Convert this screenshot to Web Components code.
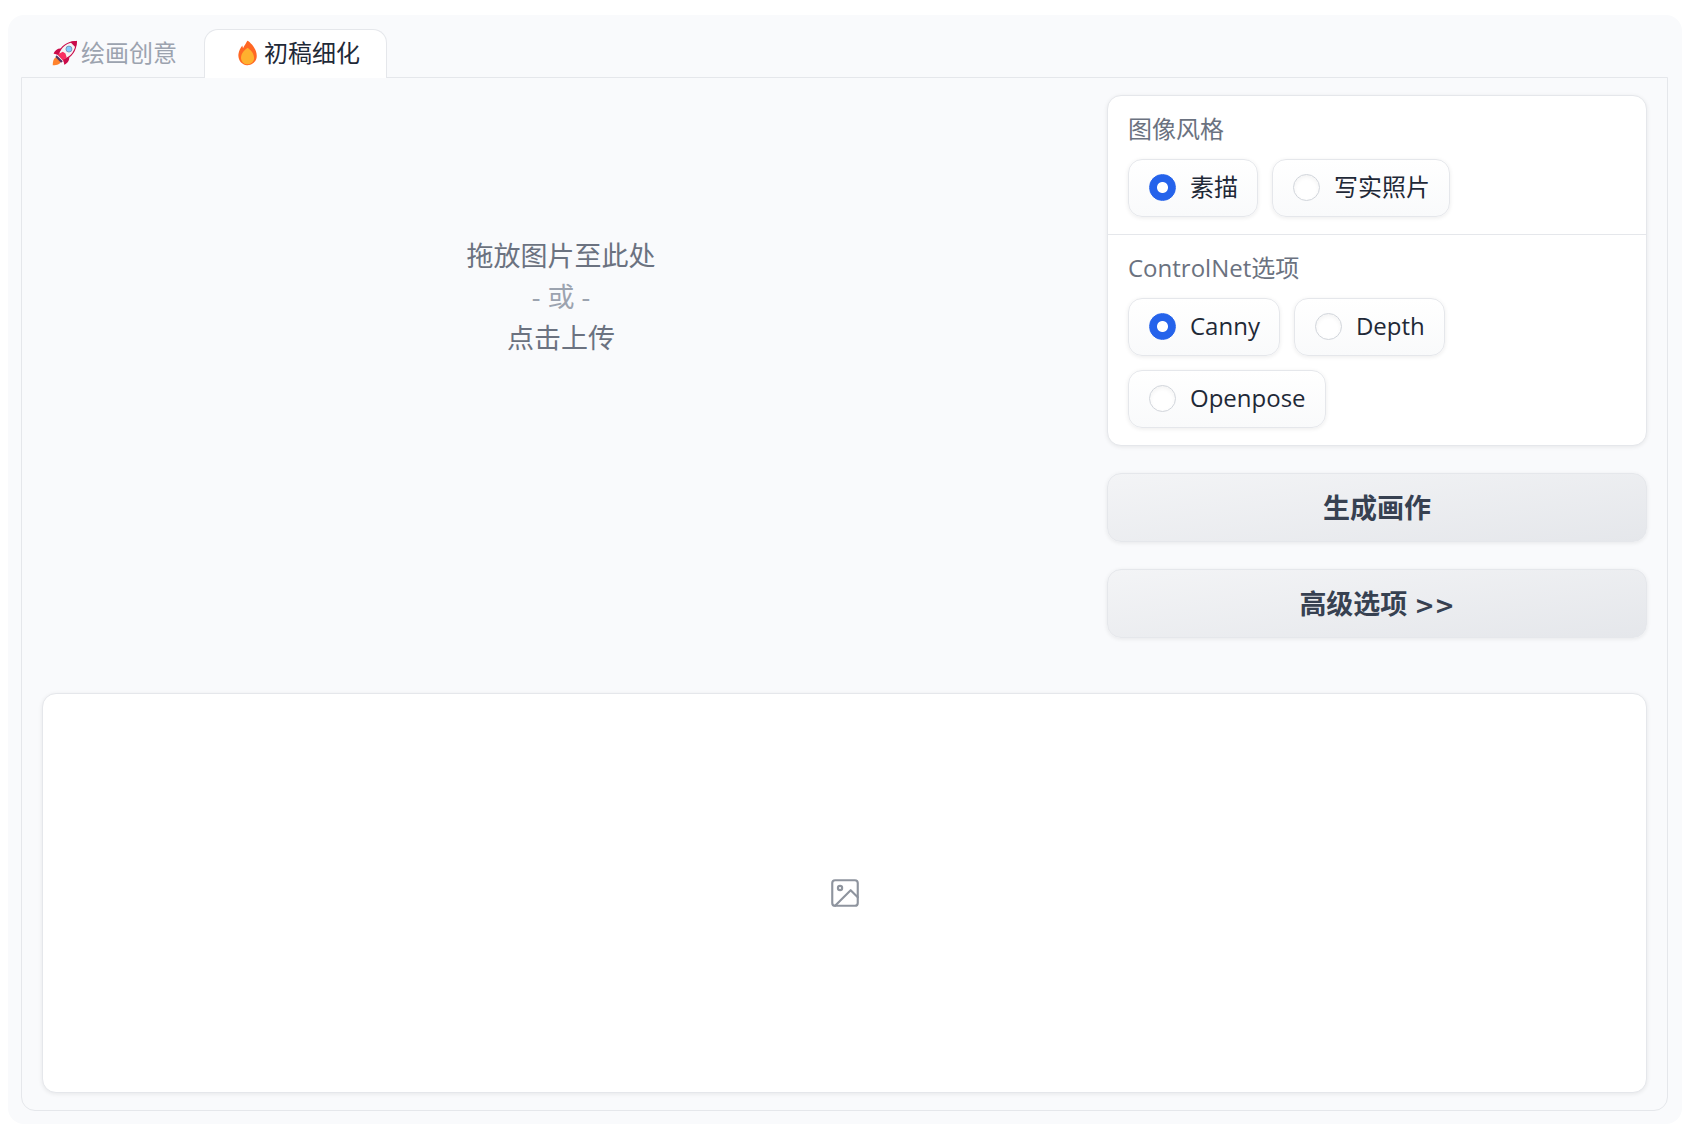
<!DOCTYPE html>
<html lang="zh-CN">
<head>
<meta charset="utf-8">
<meta name="viewport" content="width=device-width, initial-scale=1">
<title>初稿细化</title>
<style>
  :root {
    --line: #e5e7eb;
    --fill: #f9fafc;
    --text: #1f2937;
    --muted: #6b7280;
    --faint: #9ca3af;
    --accent: #2563eb;
    --radius: 14px;
    --shadow: 0 1px 4px rgba(0, 0, 0, .08);
  }
  body {
    margin: 15px 13px 13px 8px;
    background: #fff;
    color: var(--text);
    font: 24px/36px "Open Sans", "Noto Sans CJK SC", sans-serif;
  }
</style>
</head>
<body>
<paint-app></paint-app>

<script>
class BaseElement extends HTMLElement {
  connectedCallback() {
    if (this.shadowRoot) return;
    this.attachShadow({ mode: "open" }).innerHTML = this.render();
  }
}

const ROCKET = `
<svg viewBox="0 0 32 32" aria-hidden="true">
  <path fill="#FF822D" d="M7 20.5c-3.4.8-5 3.600-5 9.500 5.600 0 8.600-1.500 9.500-5z"/>
  <path fill="#533566" d="M6.500 18.500 13.500 25.500 11.500 27 5 20.500z"/>
  <path fill="#F92F60" d="M3 16.500 9.500 11.500 14 12 20 18.500 20.300 22.500 15.500 29.300 14 24.500 7.500 18z"/>
  <path fill="#CA0B4A" d="M3 16.500c1.500-3.500 4.500-6 9-5.500L8.500 18zM15.500 29.300c3.500-1.700 5.800-4.800 5.300-9.300L14 24z"/>
  <path fill="#F4F4F4" stroke="#CA0B4A" stroke-width="1.300" d="M8.500 17.500C11 9 18 3.300 29 2.800c-.5 11-6.300 18-14.700 20.600z"/>
  <path fill="#CA0B4A" d="M22 3.500c2.500-1 5-1.300 7.500-1.300 0 2.500-.4 5-1.300 7.600z"/>
  <path fill="#F92F60" d="M8 17.500 13.500 14.500 16.500 16.500 18 21 13.500 24z"/>
  <circle cx="20.500" cy="11.500" r="3.400" fill="#83CBFF" stroke="#7191b5" stroke-width="1"/>
</svg>`;

const FIRE = `
<svg viewBox="0 0 32 32" aria-hidden="true">
  <path fill="#FF6723" d="M26 19.340c0 6.100-5.050 11.005-11.150 10.641-6.269-.374-10.560-6.403-9.752-12.705.489-3.833 2.286-7.120 4.242-9.670.340-.445.689 3.136 1.038 2.742.350-.405 3.594-6.019 4.722-7.991a.694.694 0 0 1 1.028-.213C18.394 3.854 26 10.277 26 19.340"/>
  <path fill="#FFB02E" d="M23 21.851c0 4.042-3.519 7.291-7.799 7.144-4.620-.156-7.788-4.384-7.110-8.739C9.070 14.012 15.480 10 15.480 10S23 14.707 23 21.851"/>
</svg>`;

customElements.define("tab-bar", class extends BaseElement {
  render() {
    return `
    <style>
      :host { display: flex; }
      button {
        display: flex; align-items: center; box-sizing: border-box; height: 49px;
        margin: 0 0 -1px; padding: 0 26px 2px 27px;
        border: 1px solid transparent; border-bottom: 0;
        border-radius: var(--radius) var(--radius) 0 0;
        background: none; color: var(--faint); font: inherit; cursor: pointer;
      }
      button[aria-selected="true"] { background: #fff; border-color: var(--line); color: var(--text); z-index: 1; }
      .icon { display: flex; justify-content: center; width: 32px; }
      svg { width: 28px; height: 28px; }
    </style>
    <button role="tab" aria-selected="false"><span class="icon">${ROCKET}</span>绘画创意</button>
    <button role="tab" aria-selected="true"><span class="icon">${FIRE}</span>初稿细化</button>`;
  }
});

customElements.define("upload-area", class extends BaseElement {
  render() {
    return `
    <style>
      :host { display: block; }
      button {
        display: flex; flex-direction: column; align-items: center; justify-content: center;
        width: 100%; min-height: 403px; padding: 0; border: 0; background: none;
        color: var(--muted); font: inherit; font-size: 27px; line-height: 41px; cursor: pointer;
      }
      .or { color: var(--faint); }
    </style>
    <button type="button"><span>拖放图片至此处</span><span class="or">- 或 -</span><span>点击上传</span></button>`;
  }
});

customElements.define("radio-group", class extends BaseElement {
  render() {
    const options = this.getAttribute("options").split(",");
    return `
    <style>
      :host { display: block; padding: 15px 20px 17px; }
      fieldset { margin: 0; padding: 0; border: 0; min-width: 0; }
      legend { padding: 0; margin-bottom: 12px; color: var(--muted); }
      .options { display: flex; flex-wrap: wrap; gap: 14px; }
      label {
        display: flex; align-items: center; gap: 14px; padding: 9px 19px 11px 20px;
        border: 1px solid var(--line); border-radius: var(--radius);
        background: linear-gradient(to bottom, #fff, #f9fafb);
        box-shadow: var(--shadow); cursor: pointer;
      }
      input {
        appearance: none; box-sizing: border-box; width: 27px; height: 27px; margin: 0;
        border: 1px solid #d1d5db; border-radius: 50%; background: #fff;
        box-shadow: inset 0 2px 4px rgba(0, 0, 0, .05);
      }
      input:checked {
        border-color: var(--accent); box-shadow: none;
        background: radial-gradient(circle, #fff 5px, var(--accent) 6px);
      }
    </style>
    <fieldset>
      <legend>${this.getAttribute("caption")}</legend>
      <div class="options">
        ${options.map((text, i) => `<label><input type="radio" name="choice"${i ? "" : " checked"}><span>${text}</span></label>`).join("")}
      </div>
    </fieldset>`;
  }
});

customElements.define("option-card", class extends BaseElement {
  render() {
    return `
    <style>
      :host {
        display: block; border: 1px solid var(--line); border-radius: var(--radius);
        background: #fff; box-shadow: var(--shadow);
      }
      ::slotted(:not(:first-child)) { border-top: 1px solid var(--line); }
    </style>
    <slot></slot>`;
  }
});

customElements.define("action-button", class extends BaseElement {
  render() {
    return `
    <style>
      :host { display: block; }
      button {
        box-sizing: border-box; width: 100%; height: 69px; padding: 0 20px;
        border: 1px solid var(--line); border-radius: var(--radius);
        background: linear-gradient(to bottom right, #f3f4f6, #e5e7eb);
        box-shadow: var(--shadow); color: #374151;
        font: inherit; font-size: 27px; font-weight: 700; line-height: 41px; cursor: pointer;
      }
      ::slotted(span) { font-family: "DejaVu Sans", sans-serif; font-size: 24px; line-height: 24px; }
    </style>
    <button type="button"><slot></slot></button>`;
  }
});

customElements.define("image-gallery", class extends BaseElement {
  render() {
    return `
    <style>
      :host {
        display: flex; align-items: center; justify-content: center;
        box-sizing: border-box; min-height: 400px;
        border: 1px solid var(--line); border-radius: var(--radius);
        background: #fff; box-shadow: var(--shadow);
      }
      svg { width: 34px; height: 34px; fill: none; stroke: #8e949e; stroke-width: 1.500; stroke-linecap: round; stroke-linejoin: round; }
    </style>
    <svg viewBox="0 0 24 24" role="img" aria-label="图片">
      <rect x="3" y="3" width="18" height="18" rx="2"/>
      <circle cx="8.500" cy="8.500" r="1.500"/>
      <path d="M21 15l-5-5L5 21"/>
    </svg>`;
  }
});

customElements.define("paint-app", class extends BaseElement {
  render() {
    return `
    <style>
      :host { display: block; padding: 14px 14px 13px 13px; border-radius: 16px; background: var(--fill); }
      main {
        display: flex; flex-direction: column; gap: 55px; padding: 17px 20px;
        border: 1px solid var(--line); border-radius: 0 0 var(--radius) var(--radius);
      }
      .row { display: grid; grid-template-columns: 173fr 90fr; gap: 27px; }
      .side { display: flex; flex-direction: column; gap: 27px; }
    </style>
    <tab-bar role="tablist"></tab-bar>
    <main>
      <div class="row">
        <upload-area></upload-area>
        <div class="side">
          <option-card>
            <radio-group caption="图像风格" options="素描,写实照片"></radio-group>
            <radio-group caption="ControlNet选项" options="Canny,Depth,Openpose"></radio-group>
          </option-card>
          <action-button>生成画作</action-button>
          <action-button>高级选项 <span>&gt;&gt;</span></action-button>
        </div>
      </div>
      <image-gallery></image-gallery>
    </main>`;
  }
});
</script>
</body>
</html>
